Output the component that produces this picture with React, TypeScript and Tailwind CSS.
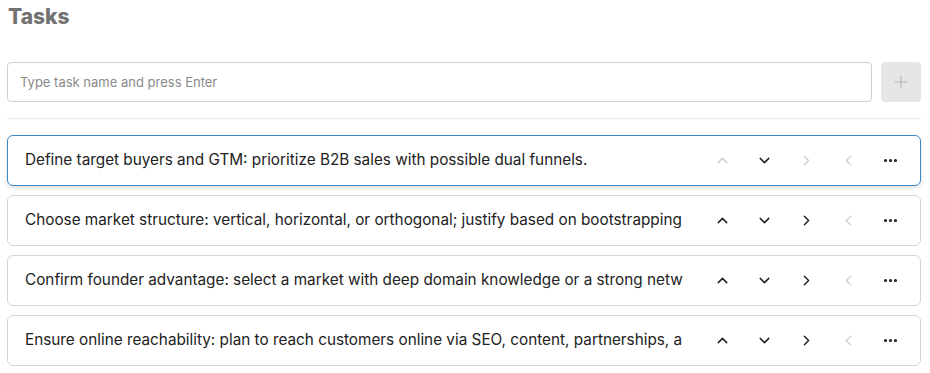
import { ChevronDown, ChevronLeft, ChevronRight, ChevronUp, Ellipsis, Plus } from "lucide-react";

const tasks = [
	"Define target buyers and GTM: prioritize B2B sales with possible dual funnels.",
	"Choose market structure: vertical, horizontal, or orthogonal; justify based on bootstrapping",
	"Confirm founder advantage: select a market with deep domain knowledge or a strong network and explain why.",
	"Ensure online reachability: plan to reach customers online via SEO, content, partnerships, and communities.",
];

const IconBtn = ({ children, disabled }: { children: React.ReactNode; disabled?: boolean }) => (
	<button
		className={
			"flex h-8 w-8 items-center justify-center " +
			(disabled ? "text-[#d0d0d0]" : "text-[#1f1f1f]")
		}
	>
		{children}
	</button>
);

export default function App() {
	return (
		<div className="pl-[7px] pr-[9px] font-['Inter',sans-serif] text-[#222]">
			<h1 className="pl-[1px] pt-[3px] text-[21px] leading-[28px] font-extrabold text-[#727272]">
				Tasks
			</h1>
			<div className="mt-[31px] flex gap-[9px]">
				<input
					className="h-10 flex-1 rounded-[4px] border border-[#cfcfcf] px-3 text-[13px] outline-none placeholder:text-[#8a8a8a]"
					placeholder="Type task name and press Enter"
				/>
				<button className="flex h-10 w-10 items-center justify-center rounded-[4px] bg-[#e6e6e6] text-[#b0b0b0]">
					<Plus size={20} strokeWidth={1.25} />
				</button>
			</div>
			<div className="mt-[16px] border-t border-[#ececec]" />
			<div className="mt-[16px] flex flex-col gap-[9px]">
				{tasks.map((t, i) => (
					<div
						key={i}
						className={
							"flex h-[51px] items-center rounded-[6px] border bg-white pl-[17px] pr-[14px] " +
							(i === 0
								? "border-[#3b86c6] shadow-[0_2px_4px_rgba(0,0,0,0.12)]"
								: "border-[#d6d6d6]")
						}
					>
						<div className="mr-[23px] flex-1 overflow-hidden whitespace-nowrap text-[15.3px]">
							{t}
						</div>
						<div className="flex gap-[10px]">
							<IconBtn disabled={i === 0}>
								<ChevronUp size={17} strokeWidth={2} />
							</IconBtn>
							<IconBtn>
								<ChevronDown size={17} strokeWidth={2} />
							</IconBtn>
							<IconBtn disabled={i === 0}>
								<ChevronRight size={17} strokeWidth={2} />
							</IconBtn>
							<IconBtn disabled>
								<ChevronLeft size={17} strokeWidth={2} />
							</IconBtn>
							<IconBtn>
								<Ellipsis size={17} strokeWidth={2.5} />
							</IconBtn>
						</div>
					</div>
				))}
			</div>
		</div>
	);
}
